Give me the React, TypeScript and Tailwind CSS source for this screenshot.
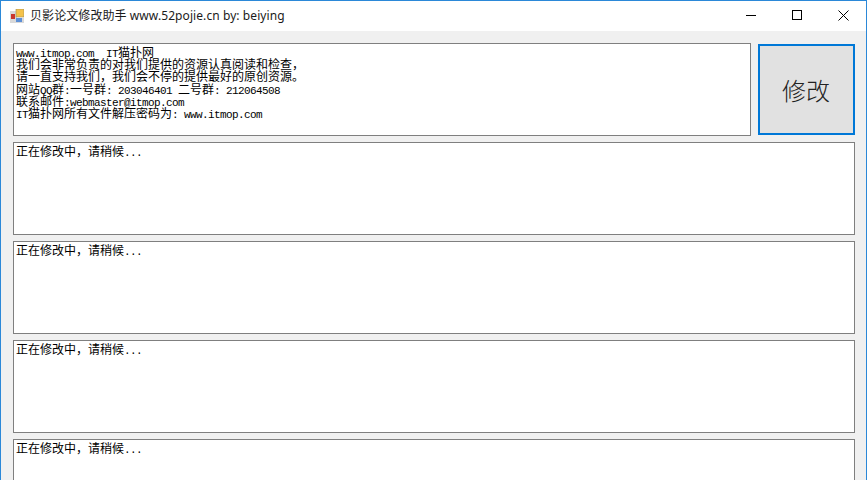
import React from 'react';

const cjkFont = '[font-family:"Noto_Sans_CJK_SC",sans-serif]';

// SimSun look: latin runs are 6px wide, CJK runs are 12px wide
const Mixed: React.FC<{ text: string }> = ({ text }) => {
  const parts = text.match(/[\u0000-\u00ff]+|[^\u0000-\u00ff]+/g) ?? [];
  return (
    <>
      {parts.map((part, i) =>
        /^[\u0000-\u00ff]/.test(part) ? (
          <span key={i} className='text-[11px] tracking-[-0.6px] [font-family:"Liberation_Mono",monospace]'>
            {part}
          </span>
        ) : (
          <span key={i} className={`text-[12px] ${cjkFont}`}>
            {part}
          </span>
        )
      )}
    </>
  );
};

const TextBox: React.FC<{ lines: string[]; className?: string }> = ({ lines, className }) => (
  <div className={`bg-white border border-[#7f7f7f] pl-[2px] pt-[1px] overflow-hidden text-black ${className ?? ''}`}>
    {lines.map((line, i) => (
      <div key={i} className="h-[12.2px] leading-[12px] whitespace-pre">
        <Mixed text={line} />
      </div>
    ))}
  </div>
);

const introLines = [
  'www.itmop.com  IT猫扑网',
  '我们会非常负责的对我们提供的资源认真阅读和检查，',
  '请一直支持我们，我们会不停的提供最好的原创资源。',
  '网站QQ群:一号群: 203046401 二号群: 212064508',
  '联系邮件:webmaster@itmop.com',
  'IT猫扑网所有文件解压密码为: www.itmop.com',
];

const waiting = ['正在修改中，请稍候...'];

export default function App() {
  return (
    <div className="h-[499px] w-[867px] bg-white overflow-hidden">
      <div className="h-[480px] flex flex-col border-x border-t border-[#2b88d8] overflow-hidden">
        <div className="h-[30px] shrink-0 bg-white flex items-center">
          <svg width="14" height="14" viewBox="0 0 14 14" className="ml-[9px] mr-[1px] shrink-0">
            <rect x="0" y="2" width="7" height="12" fill="#d9d9d9" />
            <rect x="6" y="9" width="8" height="5" fill="#d9d9d9" />
            <rect x="1" y="5" width="4" height="5" fill="#c9362c" />
            <rect x="6" y="0" width="8" height="8" fill="#f4c24a" stroke="#9a8a5a" strokeWidth="0.6" />
            <rect x="6" y="9" width="6" height="4" fill="#5d8fd6" />
          </svg>
          <span className={`ml-[5px] text-[12px] tracking-[0.08px] text-[#1b1b1b] [font-family:"Noto_Sans","Noto_Sans_CJK_SC",sans-serif]`}>
            贝影论文修改助手 www.52pojie.cn by: beiying
          </span>
          <div className="ml-auto flex h-full pb-[2px]">
            <div className="w-[46px] flex items-center justify-center">
              <svg width="10" height="10" viewBox="0 0 10 10">
                <path d="M0 5.5H10" stroke="#000" />
              </svg>
            </div>
            <div className="w-[46px] mr-px flex items-center justify-center">
              <svg width="10" height="10" viewBox="0 0 10 10">
                <rect x="0.5" y="0.5" width="9" height="9" fill="none" stroke="#000" />
              </svg>
            </div>
            <div className="w-[45px] flex items-center justify-center">
              <svg width="11" height="11" viewBox="0 0 11 11">
                <path d="M0.5 0.5L10.5 10.5M10.5 0.5L0.5 10.5" stroke="#000" />
              </svg>
            </div>
          </div>
        </div>

        <div className="flex-1 bg-[#f0f0f0] pl-[12px] pr-[11px] pt-[12px] flex flex-col gap-[6px]">
          <div className="flex gap-[7px] shrink-0">
            <TextBox lines={introLines} className="w-[738px] h-[93px]" />
            <button className={`mt-px w-[97px] h-[91px] pr-px bg-[#e1e1e1] border-2 border-[#0078d7] text-[24px] font-light text-[#222] ${cjkFont}`}>
              修改
            </button>
          </div>
          <TextBox lines={waiting} className="h-[93px] shrink-0" />
          <TextBox lines={waiting} className="h-[93px] shrink-0" />
          <TextBox lines={waiting} className="h-[93px] shrink-0" />
          <TextBox lines={waiting} className="h-[93px] shrink-0" />
        </div>
      </div>
    </div>
  );
}
